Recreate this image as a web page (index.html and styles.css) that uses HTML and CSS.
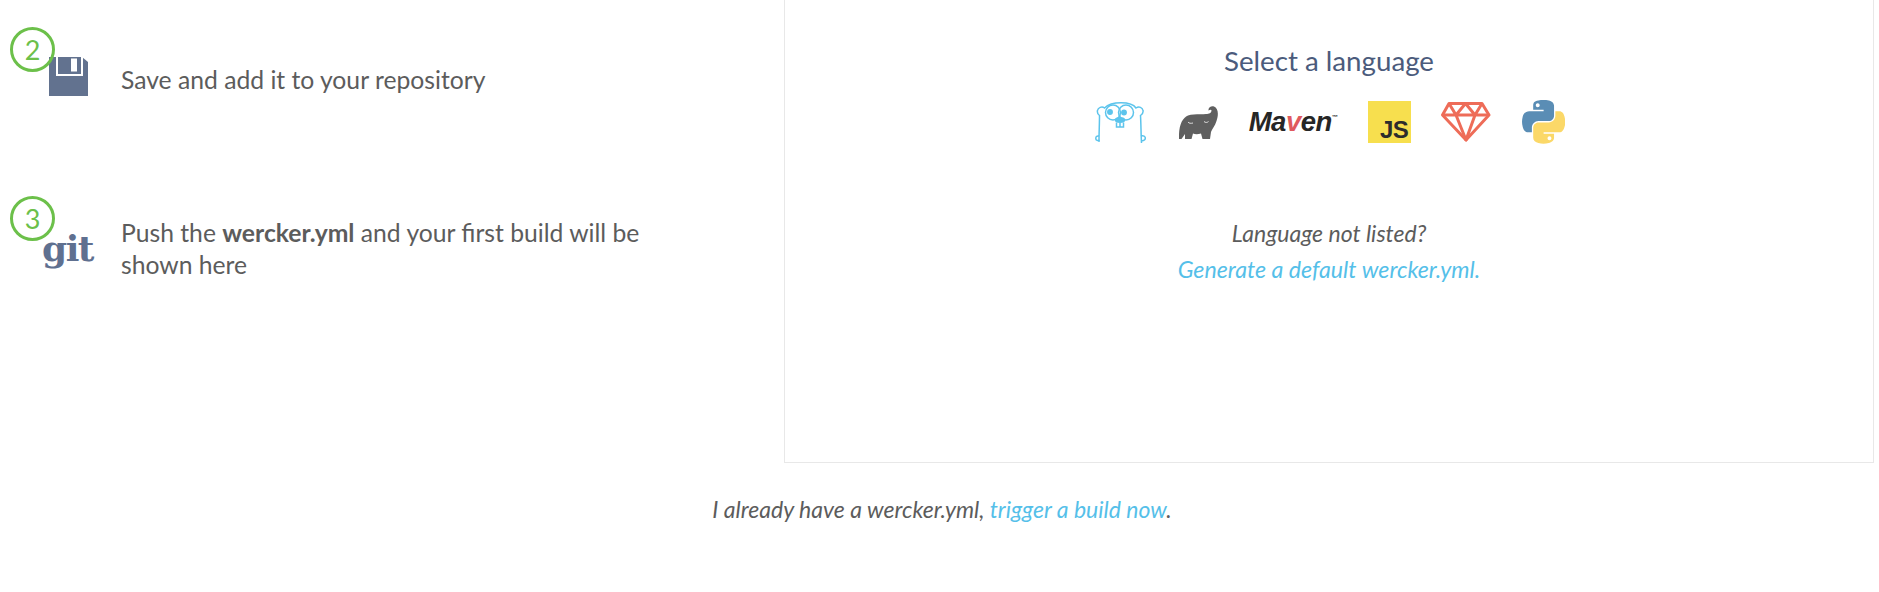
FILE: index.html
```html
<!DOCTYPE html>
<html lang="en">
<head>
    <meta charset="UTF-8">
    <meta name="viewport" content="width=device-width, initial-scale=1.0">
    <title>Add wercker.yml</title>
    <link rel="stylesheet" href="styles.css">
</head>
<body>
    <div class="main">
        <div class="steps">
            <div class="step">
                <span class="step-number">2</span>
                <div class="step-icon">
                    <svg class="floppy" viewBox="0 0 39 39" width="39" height="39">
                        <path d="M0 0H33L39 5V39H0Z" fill="#62728f"/>
                        <path d="M8 0V18H33V0" fill="none" stroke="#fff" stroke-width="2"/>
                        <rect x="22" y="1.500" width="6" height="13" fill="#fff"/>
                    </svg>
                </div>
                <p>Save and add it to your repository</p>
            </div>
            <div class="step">
                <span class="step-number">3</span>
                <div class="step-icon">
                    <span class="git">git</span>
                </div>
                <p>Push the <strong>wercker.yml</strong> and your first build will be shown here</p>
            </div>
        </div>

        <div class="panel">
            <h2>Select a language</h2>
            <div class="languages">
                <svg class="gopher" viewBox="0 0 51 41" width="51" height="41" fill="none" stroke="#5cc4ec" stroke-width="1.500">
                    <path d="M4 40C4 30 4.500 22 4.500 13.500C3 12.500 2 11 2.500 8.500C3 5.500 7 4 9.500 6C14 1.500 20 .8 26 .8C32 .8 38 1.500 41 6C44 4 47.500 5.500 48 8.500C48.500 11 47 12.500 45.500 13.500C46 22 46 32 46.500 41"/>
                    <circle cx="18" cy="10.500" r="7.500"/>
                    <circle cx="31" cy="10.500" r="7.500"/>
                    <circle cx="15" cy="10" r="2.200" fill="#5cc4ec"/>
                    <circle cx="29" cy="10.500" r="2.200" fill="#5cc4ec"/>
                    <ellipse cx="25" cy="18" rx="4.500" ry="2.200" fill="#5cc4ec"/>
                    <path d="M21.500 20.500V25H28.500V20.500M25 21V25"/>
                    <path d="M4 34C1.500 33.500 .8 35 .8 36.500C.8 38.500 3 39 4.500 38M46 34C48.500 33 50.300 34.500 50.300 36C50.300 38 48.500 39 46.500 38.500"/>
                </svg>
                <svg viewBox="0 0 39 33" width="39" height="33">
                    <path d="M0 33C-.5 20 3 12 9 9.500C14 7.500 22 8.500 27 8C30 8 32.500 7 32.500 4.500C32.500 3.500 31 3.500 29.500 4.500C29 2 32-.5 35 .5C39 2 40 8 37.500 15C36 20 33 23 32 26L31 33H23.500L22 27.500C19 28.500 16 28.500 14 27.500L12.500 33H6V28L2.500 33Z" fill="#5f5f5f"/>
                    <path d="M9 16C10 17.500 12 17.500 14 17M25 15.500C26.500 17 28.500 16.500 29.500 15.500" fill="none" stroke="#fff" stroke-width=".8"/>
                </svg>
                <span class="maven">Ma<span class="maven-v">v</span>en<sup>™</sup></span>
                <span class="js">JS</span>
                <svg viewBox="0 0 50 40" width="50" height="40" fill="none" stroke="#ee6c58" stroke-width="3" stroke-linejoin="round">
                    <path d="M8 1.500H41L48 13L25 38L1.500 13Z"/>
                    <path d="M1.500 13H48M8 1.500L15 13L25 38L34 13L41 1.500M15 13L24.500 1.500L34 13"/>
                </svg>
                <svg viewBox="0 0 110.400 112" width="43" height="43.600">
                    <path d="M54.919.001c-4.584.022-8.961.413-12.813 1.095C30.760 3.099 28.700 7.295 28.700 15.032v10.219h26.813v3.406H18.638c-7.793 0-14.616 4.684-16.750 13.594-2.462 10.213-2.571 16.586 0 27.250 1.905 7.938 6.457 13.594 14.250 13.594h9.219v-12.250c0-8.850 7.657-16.656 16.750-16.656h26.781c7.454 0 13.406-6.138 13.406-13.625V15.032c0-7.266-6.130-12.725-13.406-13.937C64.282.328 59.502-.020 54.919.001zm-14.500 8.219c2.770 0 5.031 2.299 5.031 5.125 0 2.816-2.262 5.094-5.031 5.094-2.780 0-5.031-2.278-5.031-5.094 0-2.826 2.251-5.125 5.031-5.125z" fill="#5a8db5"/>
                    <path d="M85.638 28.657v11.906c0 9.231-7.826 17-16.750 17H42.106c-7.336 0-13.406 6.279-13.406 13.625v25.531c0 7.266 6.319 11.540 13.406 13.625 8.487 2.496 16.626 2.947 26.781 0 6.750-1.954 13.406-5.888 13.406-13.625V86.501H55.513v-3.406H95.700c7.793 0 10.696-5.436 13.406-13.594 2.800-8.399 2.680-16.476 0-27.250-1.926-7.757-5.604-13.594-13.406-13.594zM70.575 93.313c2.780 0 5.031 2.278 5.031 5.094 0 2.826-2.251 5.125-5.031 5.125-2.770 0-5.031-2.299-5.031-5.125 0-2.816 2.261-5.094 5.031-5.094z" fill="#fbd868"/>
                </svg>
            </div>
            <p class="not-listed">Language not listed?</p>
            <a class="generate" href="#">Generate a default wercker.yml.</a>
        </div>
    </div>
    <p class="already">I already have a wercker.yml, <a href="#">trigger a build now</a>.</p>
</body>
</html>
```

FILE: styles.css
```css
body {
    font-family: Lato, sans-serif;
    font-size: 24.7px;
    line-height: 32px;
    color: #5c5c5c;
    background-color: #fff;
    margin: 0;
    padding: 0;
}
a {
    color: #55bfe9;
    text-decoration: none;
}
.main {
    display: flex;
}
.steps {
    width: 784px;
    padding-top: 41px;
    box-sizing: border-box;
}
.step {
    position: relative;
    display: flex;
    align-items: center;
    height: 78px;
    margin-bottom: 91px;
    width: 650px;
}
.step p {
    margin: 0;
}
.step-icon {
    width: 121px;
    flex-shrink: 0;
    display: flex;
    justify-content: flex-end;
    padding-right: 33px;
    box-sizing: border-box;
}
.floppy {
    display: block;
    margin-top: -8px;
}
.git {
    font-family: "DejaVu Serif", serif;
    font-weight: bold;
    font-size: 36px;
    line-height: 40px;
    letter-spacing: -1.500px;
    color: #5f7090;
    margin-right: -5px;
    margin-top: -3px;
}
.step-number {
    position: absolute;
    left: 10px;
    top: -14px;
    width: 45px;
    height: 45px;
    box-sizing: border-box;
    border: 3px solid #6cc04a;
    border-radius: 50%;
    color: #6cc04a;
    font-size: 27px;
    font-weight: 400;
    line-height: 39px;
    text-align: center;
}
.panel {
    height: 463px;
    margin-right: 5px;
    flex: 1;
    box-sizing: border-box;
    border: 1px solid #e8e8e8;
    border-top: none;
    text-align: center;
}
.panel h2 {
    margin: 43px 0 0;
    font-size: 27.700px;
    font-weight: 400;
    line-height: 36px;
    color: #4b5b7c;
}
.languages {
    display: flex;
    justify-content: center;
    align-items: center;
    gap: 31px;
    height: 42px;
    margin-top: 22px;
    padding-left: 2px;
}
.languages svg {
    display: block;
}
.languages .gopher {
    margin-right: 2px;
}
.maven {
    font-family: "Liberation Sans", sans-serif;
    font-weight: bold;
    font-style: italic;
    font-size: 27.500px;
    line-height: 30px;
    letter-spacing: -.5px;
    color: #262626;
}
.maven-v {
    color: #e0595e;
}
.maven sup {
    font-size: 6px;
    line-height: 0;
    vertical-align: 12px;
    font-style: normal;
}
.js {
    width: 43px;
    height: 42px;
    margin-right: -1px;
    box-sizing: border-box;
    padding: 17px 3px 0 0;
    background-color: #f7df4e;
    color: #2c2c2c;
    font-family: "Liberation Sans", sans-serif;
    font-weight: bold;
    font-size: 24px;
    line-height: 24px;
    text-align: right;
    letter-spacing: -.5px;
}
.not-listed {
    margin: 74px 0 0;
    font-size: 23px;
    font-style: italic;
}
.generate {
    display: block;
    margin-top: 4px;
    font-size: 23.200px;
    font-style: italic;
}
.already {
    margin: 30px 0 0;
    padding-left: 5px;
    text-align: center;
    font-size: 23px;
    font-style: italic;
}
```
